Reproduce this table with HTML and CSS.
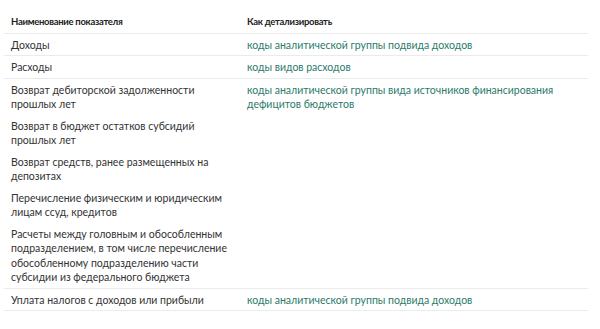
FILE: index.html
```html
<!DOCTYPE html>
<html lang="ru">
<head>
<meta charset="utf-8">
<link rel="stylesheet" href="styles.css">
</head>
<body>
<table class="codes">
  <colgroup><col class="c-name"><col class="c-how"></colgroup>
  <thead>
    <tr><th>Наименование показателя</th><th>Как детализировать</th></tr>
  </thead>
  <tbody>
    <tr><td>Доходы</td><td><a href="#">коды аналитической группы подвида доходов</a></td></tr>
    <tr><td>Расходы</td><td><a href="#">коды видов расходов</a></td></tr>
    <tr class="grp"><td>Возврат дебиторской задолженности прошлых лет</td><td rowspan="5" class="last"><a href="#">коды аналитической группы вида источников финансирования дефицитов бюджетов</a></td></tr>
    <tr class="grp"><td>Возврат в бюджет остатков субсидий прошлых лет</td></tr>
    <tr class="grp"><td>Возврат средств, ранее размещенных на депозитах</td></tr>
    <tr class="grp"><td>Перечисление физическим и юридическим лицам ссуд, кредитов</td></tr>
    <tr><td>Расчеты между головным и обособленным подразделением, в том числе перечисление обособленному подразделению части субсидии из федерального бюджета</td></tr>
    <tr><td>Уплата налогов с доходов или прибыли</td><td><a href="#">коды аналитической группы подвида доходов</a></td></tr>
  </tbody>
</table>
</body>
</html>
```
FILE: styles.css
```css
html, body {
  margin: 0;
  padding: 0;
  background: #fff;
}
body {
  font-family: "Lato", "Liberation Sans", sans-serif;
  font-size: 10.5px;
  line-height: 14.5px;
  color: #333;
}
.codes {
  border-collapse: collapse;
  margin: 11px 0 0 4px;
  width: 584px;
  table-layout: fixed;
}
.c-name { width: 236px; }
.codes th,
.codes td {
  text-align: left;
  vertical-align: top;
  padding: 4px 7px 3px;
  border-bottom: 1px solid #ebebeb;
}
.codes th {
  font-weight: 700;
  color: #222;
  font-size: 9.5px;
  letter-spacing: -0.3px;
}
.codes tr.grp td {
  border-bottom: none;
}
.codes tr.grp td.last {
  border-bottom: 1px solid #ebebeb;
}
.codes a {
  color: #2b7a6b;
  text-decoration: none;
}
```
